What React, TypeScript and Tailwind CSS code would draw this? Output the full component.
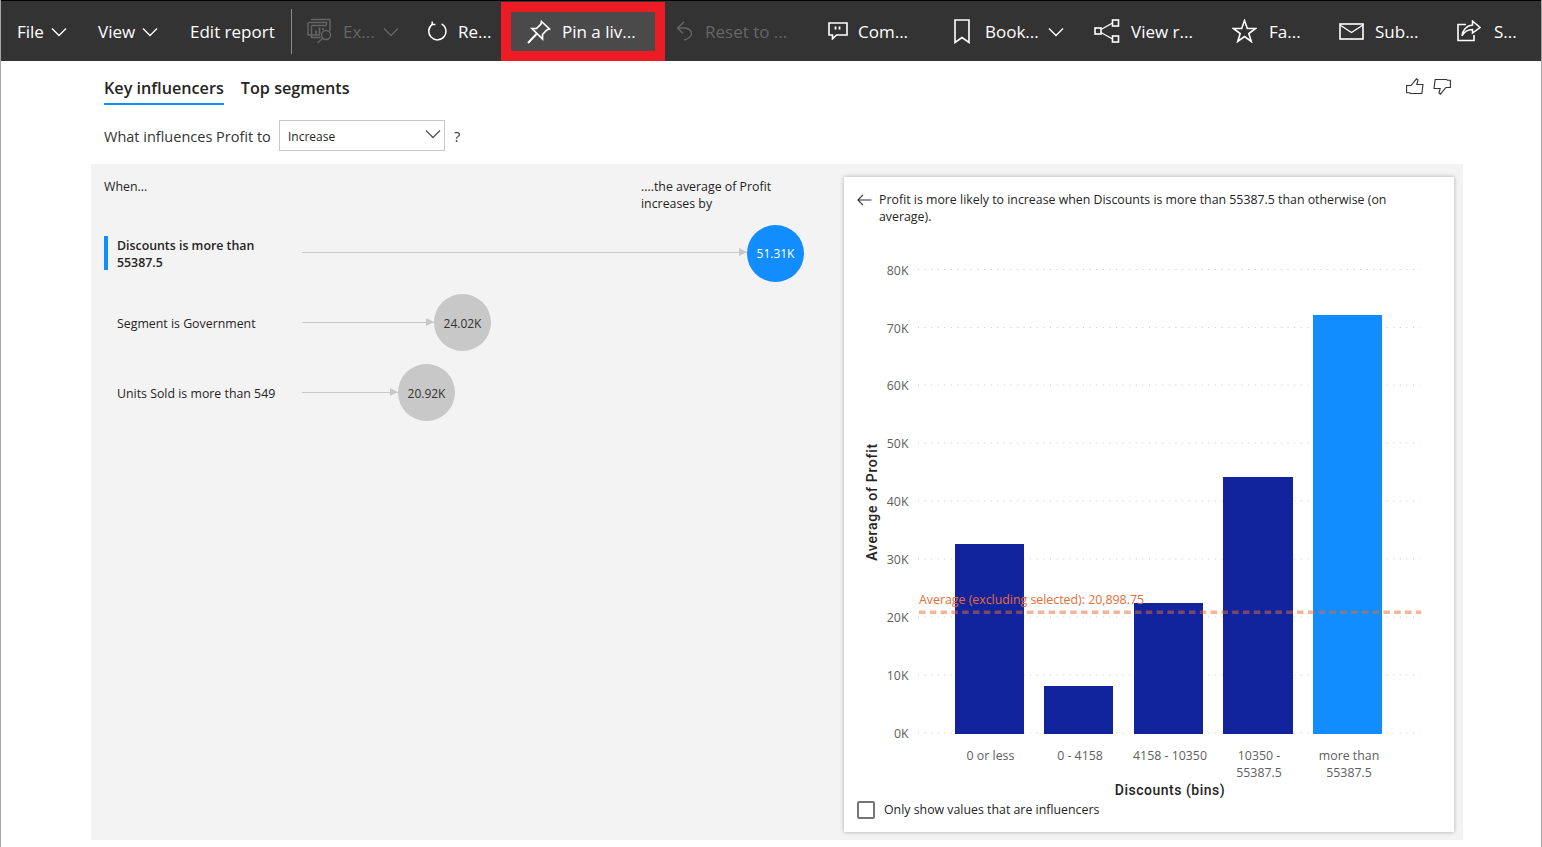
import type { ReactNode } from "react";

const ui = "font-['Open_Sans','Noto_Sans',sans-serif]";

function Chevron({ className = "" }: { className?: string }) {
  return (
    <svg width="16" height="10" viewBox="0 0 16 10" fill="none" stroke="currentColor" strokeWidth="1.3" className={className}>
      <path d="M1 1.5 L8 8.5 L15 1.5" />
    </svg>
  );
}

function Glyph({ w, h, children }: { w: number; h: number; children: ReactNode }) {
  return (
    <svg width={w} height={h} viewBox={`0 0 ${w} ${h}`} fill="none" stroke="currentColor" strokeWidth="1.4" className="shrink-0">
      {children}
    </svg>
  );
}

function ToolItem({ width, icon, label, gap, chevron, dim, lead = 0 }: {
  width: string; icon?: ReactNode; label: string; gap?: string; chevron?: string; dim?: boolean; lead?: number;
}) {
  return (
    <div className={`flex items-center shrink-0 ${width} ${dim ? "text-[#666666]" : "text-white"}`} style={{ paddingLeft: lead }}>
      {icon}
      <span className={`${gap ?? ""} mt-[1px] whitespace-nowrap`}>{label}</span>
      {chevron && <Chevron className={chevron} />}
    </div>
  );
}

const exportIcon = (
  <Glyph w={26} h={26}>
    <path d="M4 1.5 H23 V13 M1.5 4.5 H19.5 V7 M1 4.5 V17 H13" />
    <path d="M4.5 7.5 H19.5 M4.5 7.5 V19.5 H13.5" />
    <path d="M9 16 V12.5 M12.5 16 V9.5 M16 12 V10" strokeWidth="1.7" />
    <circle cx="19" cy="17" r="4.5" />
    <path d="M15.8 20.2 L10.5 25" />
  </Glyph>
);
const refreshIcon = (
  <Glyph w={20} h={20}>
    <path d="M13.6 2.8 A8.6 8.6 0 1 1 4.2 3.4" strokeWidth="1.5" />
    <path d="M4.2 0.5 V3.6 H7.4" strokeWidth="1.5" />
  </Glyph>
);
const pinIcon = (
  <Glyph w={24} h={24}>
    <path d="M14.5 1.5 L22.5 9 L19.8 10 L15.5 14.5 L15.5 19 L5 8.6 L9.5 8.5 L14 4 Z" strokeWidth="1.7" />
    <path d="M9.5 14 L1 23" strokeWidth="2" />
  </Glyph>
);
const undoIcon = (
  <Glyph w={17} h={20}>
    <path d="M8 1 L1.500 7 L7 12.500" />
    <path d="M1.500 7 H8 C13 7 16 10 15.500 13 C15 16 12 18 8 19" />
  </Glyph>
);
const commentIcon = (
  <Glyph w={20} h={18}>
    <path d="M1 1 H19 V13 H8.500 L4.500 16.800 V13 H1 Z" strokeWidth="1.6" />
    <path d="M7.500 4.500 V7.500 M11.500 4.500 V7.500" strokeWidth="1.8" />
  </Glyph>
);
const bookmarkIcon = (
  <Glyph w={16} h={25}>
    <path d="M1 1 H15 V23.500 L8 18.500 L1 23.500 Z" strokeWidth="1.6" />
  </Glyph>
);
const nodesIcon = (
  <Glyph w={26} h={24}>
    <rect x="1" y="9" width="6" height="6" strokeWidth="1.6" />
    <rect x="18.500" y="1" width="6" height="6" strokeWidth="1.6" />
    <rect x="18.500" y="17" width="6" height="6" strokeWidth="1.6" />
    <path d="M7 10.500 L18.500 4 M7 13.500 L18.500 20" />
  </Glyph>
);
const starIcon = (
  <Glyph w={25} h={24}>
    <path d="M12.500 1.500 L15.300 9.500 H23.500 L16.800 14.500 L19.300 22.500 L12.500 17.600 L5.700 22.500 L8.200 14.500 L1.500 9.500 H9.700 Z" strokeWidth="1.6" />
  </Glyph>
);
const mailIcon = (
  <Glyph w={25} h={17}>
    <rect x="1" y="1" width="23" height="15" strokeWidth="1.6" />
    <path d="M1 2 L12.500 9.500 L24 2" />
  </Glyph>
);
const shareIcon = (
  <Glyph w={24} h={22}>
    <path d="M9 4.500 H1 V20.500 H17 V15" strokeWidth="1.6" />
    <path d="M15.500 1 L23 7.500 L15.500 13 V9.500 C11 9.500 7.500 11 5 16 C5.500 10 9.500 5.500 15.500 5 Z" strokeWidth="1.5" />
  </Glyph>
);

function Toolbar() {
  return (
    <div className="flex h-[61px] shrink-0 items-center border-t border-black bg-[#333333] pl-[16px] text-[17px]">
      <ToolItem width="w-[81px]" label="File" chevron="ml-[7px] mt-[1px]" />
      <ToolItem width="w-[92px]" label="View" chevron="ml-[7px] mt-[1px]" />
      <ToolItem width="w-[101px]" label="Edit report" />
      <div className="mr-[15px] h-[45px] w-px shrink-0 bg-[#8c8c8c]" />
      <ToolItem width="w-[120px]" icon={exportIcon} label="Ex..." gap="ml-[10px]" chevron="ml-[8px] mt-[1px]" dim />
      <ToolItem width="w-[74px]" icon={refreshIcon} label="Re..." gap="ml-[10px]" lead={1} />
      <div className="flex h-[59px] w-[164px] shrink-0 self-end items-center border-[10px] border-[#ed1c24] bg-[#4a4a4a] pl-[16px] text-white">
        {pinIcon}
        <span className="ml-[11px] mt-[1px] whitespace-nowrap">Pin a liv...</span>
      </div>
      <ToolItem width="w-[162px]" icon={undoIcon} label="Reset to ..." gap="ml-[12px]" lead={11} dim />
      <ToolItem width="w-[125px]" icon={commentIcon} label="Com..." gap="ml-[10px]" lead={1} />
      <ToolItem width="w-[141px]" icon={bookmarkIcon} label="Book..." gap="ml-[15px]" chevron="ml-[9px] mt-[1px]" lead={2} />
      <ToolItem width="w-[139px]" icon={nodesIcon} label="View r..." gap="ml-[11px]" lead={1} />
      <ToolItem width="w-[107px]" icon={starIcon} label="Fa..." gap="ml-[12px]" />
      <ToolItem width="w-[118px]" icon={mailIcon} label="Sub..." gap="ml-[11px]" />
      <ToolItem width="w-[70px]" icon={shareIcon} label="S..." gap="ml-[13px]" />
    </div>
  );
}

function Influencer({ label, value, line, active }: { label: ReactNode; value: string; line: string; active?: boolean }) {
  return (
    <div className="flex h-[57px] items-center">
      <div className={`flex h-[34px] w-[198px] shrink-0 items-center border-l-4 pl-[9px] text-[12.35px] leading-[17px] text-[#252423] ${active ? "mb-[1px] border-[#118dff] font-semibold" : "border-transparent"}`}>
        <span className={active ? "mt-[2px]" : ""}>{label}</span>
      </div>
      <div className={`relative mb-[2px] h-px shrink-0 bg-[#c8c8c8] ${line}`}>
        <div className="absolute -top-[4px] right-0 h-0 w-0 border-y-[4.5px] border-l-[8px] border-y-transparent border-l-[#c8c8c8]" />
      </div>
      <div className={`flex h-[57px] w-[57px] shrink-0 items-center justify-center rounded-full text-[12px] ${active ? "bg-[#118dff] text-white" : "mb-[2px] bg-[#c8c8c8] pt-[2px] text-[#333333]"}`}>
        {value}
      </div>
    </div>
  );
}

const ticks = [
  ["80K", 270], ["70K", 328], ["60K", 385.5], ["50K", 443.5], ["40K", 501.5],
  ["30K", 559.5], ["20K", 617.5], ["10K", 675.5], ["0K", 733.5],
] as const;

const bars = [
  { x: 955, w: 69, top: 544, fill: "#12239e" },
  { x: 1044, w: 69, top: 686, fill: "#12239e" },
  { x: 1134, w: 69, top: 603, fill: "#12239e" },
  { x: 1223, w: 70, top: 477, fill: "#12239e" },
  { x: 1313, w: 69, top: 315, fill: "#118dff" },
];

const binLabels: [number, string[]][] = [
  [990.5, ["0 or less"]],
  [1080, ["0 - 4158"]],
  [1170, ["4158 - 10350"]],
  [1259, ["10350 -", "55387.5"]],
  [1349, ["more than", "55387.5"]],
];

function ProfitChart() {
  return (
    <svg width="610" height="570" viewBox="844 230 610 570" className="block shrink-0" fontFamily="'Open Sans','Noto Sans',sans-serif">
      {ticks.map(([label, y]) => (
        <g key={label}>
          <text x="908.5" y={y + 4.5} textAnchor="end" fontSize="12.35" fill="#605e5c">{label}</text>
          <line x1="918" x2="1420" y1={y - 0.5} y2={y - 0.5} stroke="#c8c8c8" strokeWidth="1" strokeDasharray="1 5.6" />
        </g>
      ))}
      {bars.map((b) => (
        <rect key={b.x} x={b.x} y={b.top} width={b.w} height={734 - b.top} fill={b.fill} />
      ))}
      <line x1="919" x2="1421" y1="612.3" y2="612.3" stroke="#e66c37" strokeOpacity="0.5" strokeWidth="3.5" strokeDasharray="6.500 4.300" />
      <text x="919" y="604" fontSize="12.35" fill="#e66c37">Average (excluding selected): 20,898.75</text>
      {binLabels.map(([x, lines]) => (
        <text key={x} x={x} textAnchor="middle" fontSize="12.35" fill="#605e5c">
          {lines.map((t, i) => (
            <tspan key={t} x={x} y={760 + i * 17}>{t}</tspan>
          ))}
        </text>
      ))}
      <text x="1170" y="794.500" textAnchor="middle" fontSize="14" fontFamily="Roboto, sans-serif" fontWeight="500" letterSpacing="0.5" fill="#252423">Discounts (bins)</text>
      <text transform="translate(876.500 502) rotate(-90)" textAnchor="middle" fontSize="14" fontFamily="Roboto, sans-serif" fontWeight="500" letterSpacing="0.7" fill="#252423">Average of Profit</text>
    </svg>
  );
}

export default function App() {
  return (
    <div className={`flex h-[847px] w-[1542px] flex-col overflow-hidden border-x border-[#a6a6a6] bg-white ${ui}`}>
      <Toolbar />
      <div className="flex flex-1 flex-col px-[90px]">
        <div className="mt-[14px] flex items-start justify-between pl-[13px]">
          <div className="flex gap-[17px] text-[16.2px] font-semibold text-[#252423]">
            <div className="h-[30px] border-b-2 border-[#118dff] leading-[26px]">Key influencers</div>
            <div className="h-[30px] leading-[26px]">Top segments</div>
          </div>
          <div className="mt-[3px] flex gap-[9px] text-[#333333]">
            <svg width="18" height="17" viewBox="0 0 18 17" fill="none" stroke="currentColor" strokeWidth="1.1">
              <path d="M0.600 7.500 H5 L10.500 0.800 L12 2 L10.800 6.500 H17 L15.800 15.500 H4.500 L3.600 14.800 H0.600 Z" />
            </svg>
            <svg width="18" height="17" viewBox="0 0 18 17" fill="none" stroke="currentColor" strokeWidth="1.1">
              <path d="M17.400 9.500 H13 L7.500 16.200 L6 15 L7.200 10.500 H1 L2.200 1.500 H13.500 L14.400 2.200 H17.400 Z" />
            </svg>
          </div>
        </div>
        <div className="mt-[15px] flex h-[31px] items-center pl-[13px] text-[14.500px] text-[#333333]">
          <span className="mt-[2px] w-[175px] shrink-0 whitespace-nowrap">What influences Profit to</span>
          <div className="flex h-[31px] w-[166px] shrink-0 items-center justify-between border border-[#c8c8c8] pl-[8px] pr-[3px] text-[12px] text-[#252423]">
            <span className="mt-[2px]">Increase</span>
            <Chevron className="-mt-[4px] text-[#555555]" />
          </div>
          <span className="ml-[9px] mt-[2px]">?</span>
        </div>
        <div className="mt-[13px] flex h-[676px] w-[1372px] shrink-0 bg-[#f3f3f3] pl-[13px] pt-[13px]">
          <div className="w-[740px] shrink-0">
            <div className="flex h-[48px] items-start justify-between pt-[1px] text-[12.35px] leading-[17px] text-[#252423]">
              <span>When...</span>
              <span className="w-[203px]">....the average of Profit<br />increases by</span>
            </div>
            <div className="flex flex-col gap-[13px]">
              <Influencer active label={<>Discounts is more than<br />55387.5</>} value="51.31K" line="w-[445px]" />
              <Influencer label="Segment is Government" value="24.02K" line="w-[132px]" />
              <Influencer label="Units Sold is more than 549" value="20.92K" line="w-[96px]" />
            </div>
          </div>
          <div className="flex h-[655px] w-[610px] shrink-0 flex-col bg-white shadow-[0_0_4px_rgba(0,0,0,0.3)]">
            <div className="flex h-[53px] shrink-0 items-start gap-[7px] pl-[13px] pr-[50px] pt-[14px] text-[12.35px] leading-[17px] text-[#252423]">
              <svg width="15" height="12" viewBox="0 0 15 12" fill="none" stroke="#333333" strokeWidth="1.100" className="mt-[3px] shrink-0">
                <path d="M6 0.800 L0.900 6 L6 11.200 M0.900 6 H14.500" />
              </svg>
              <span>Profit is more likely to increase when Discounts is more than 55387.5 than otherwise (on average).</span>
            </div>
            <ProfitChart />
            <div className="flex items-center gap-[9px] pl-[13px] pt-[1px] text-[12.35px] text-[#252423]">
              <div className="h-[18px] w-[18px] shrink-0 rounded-[2px] border-2 border-[#757575]" />
              <span>Only show values that are influencers</span>
            </div>
          </div>
        </div>
      </div>
    </div>
  );
}
